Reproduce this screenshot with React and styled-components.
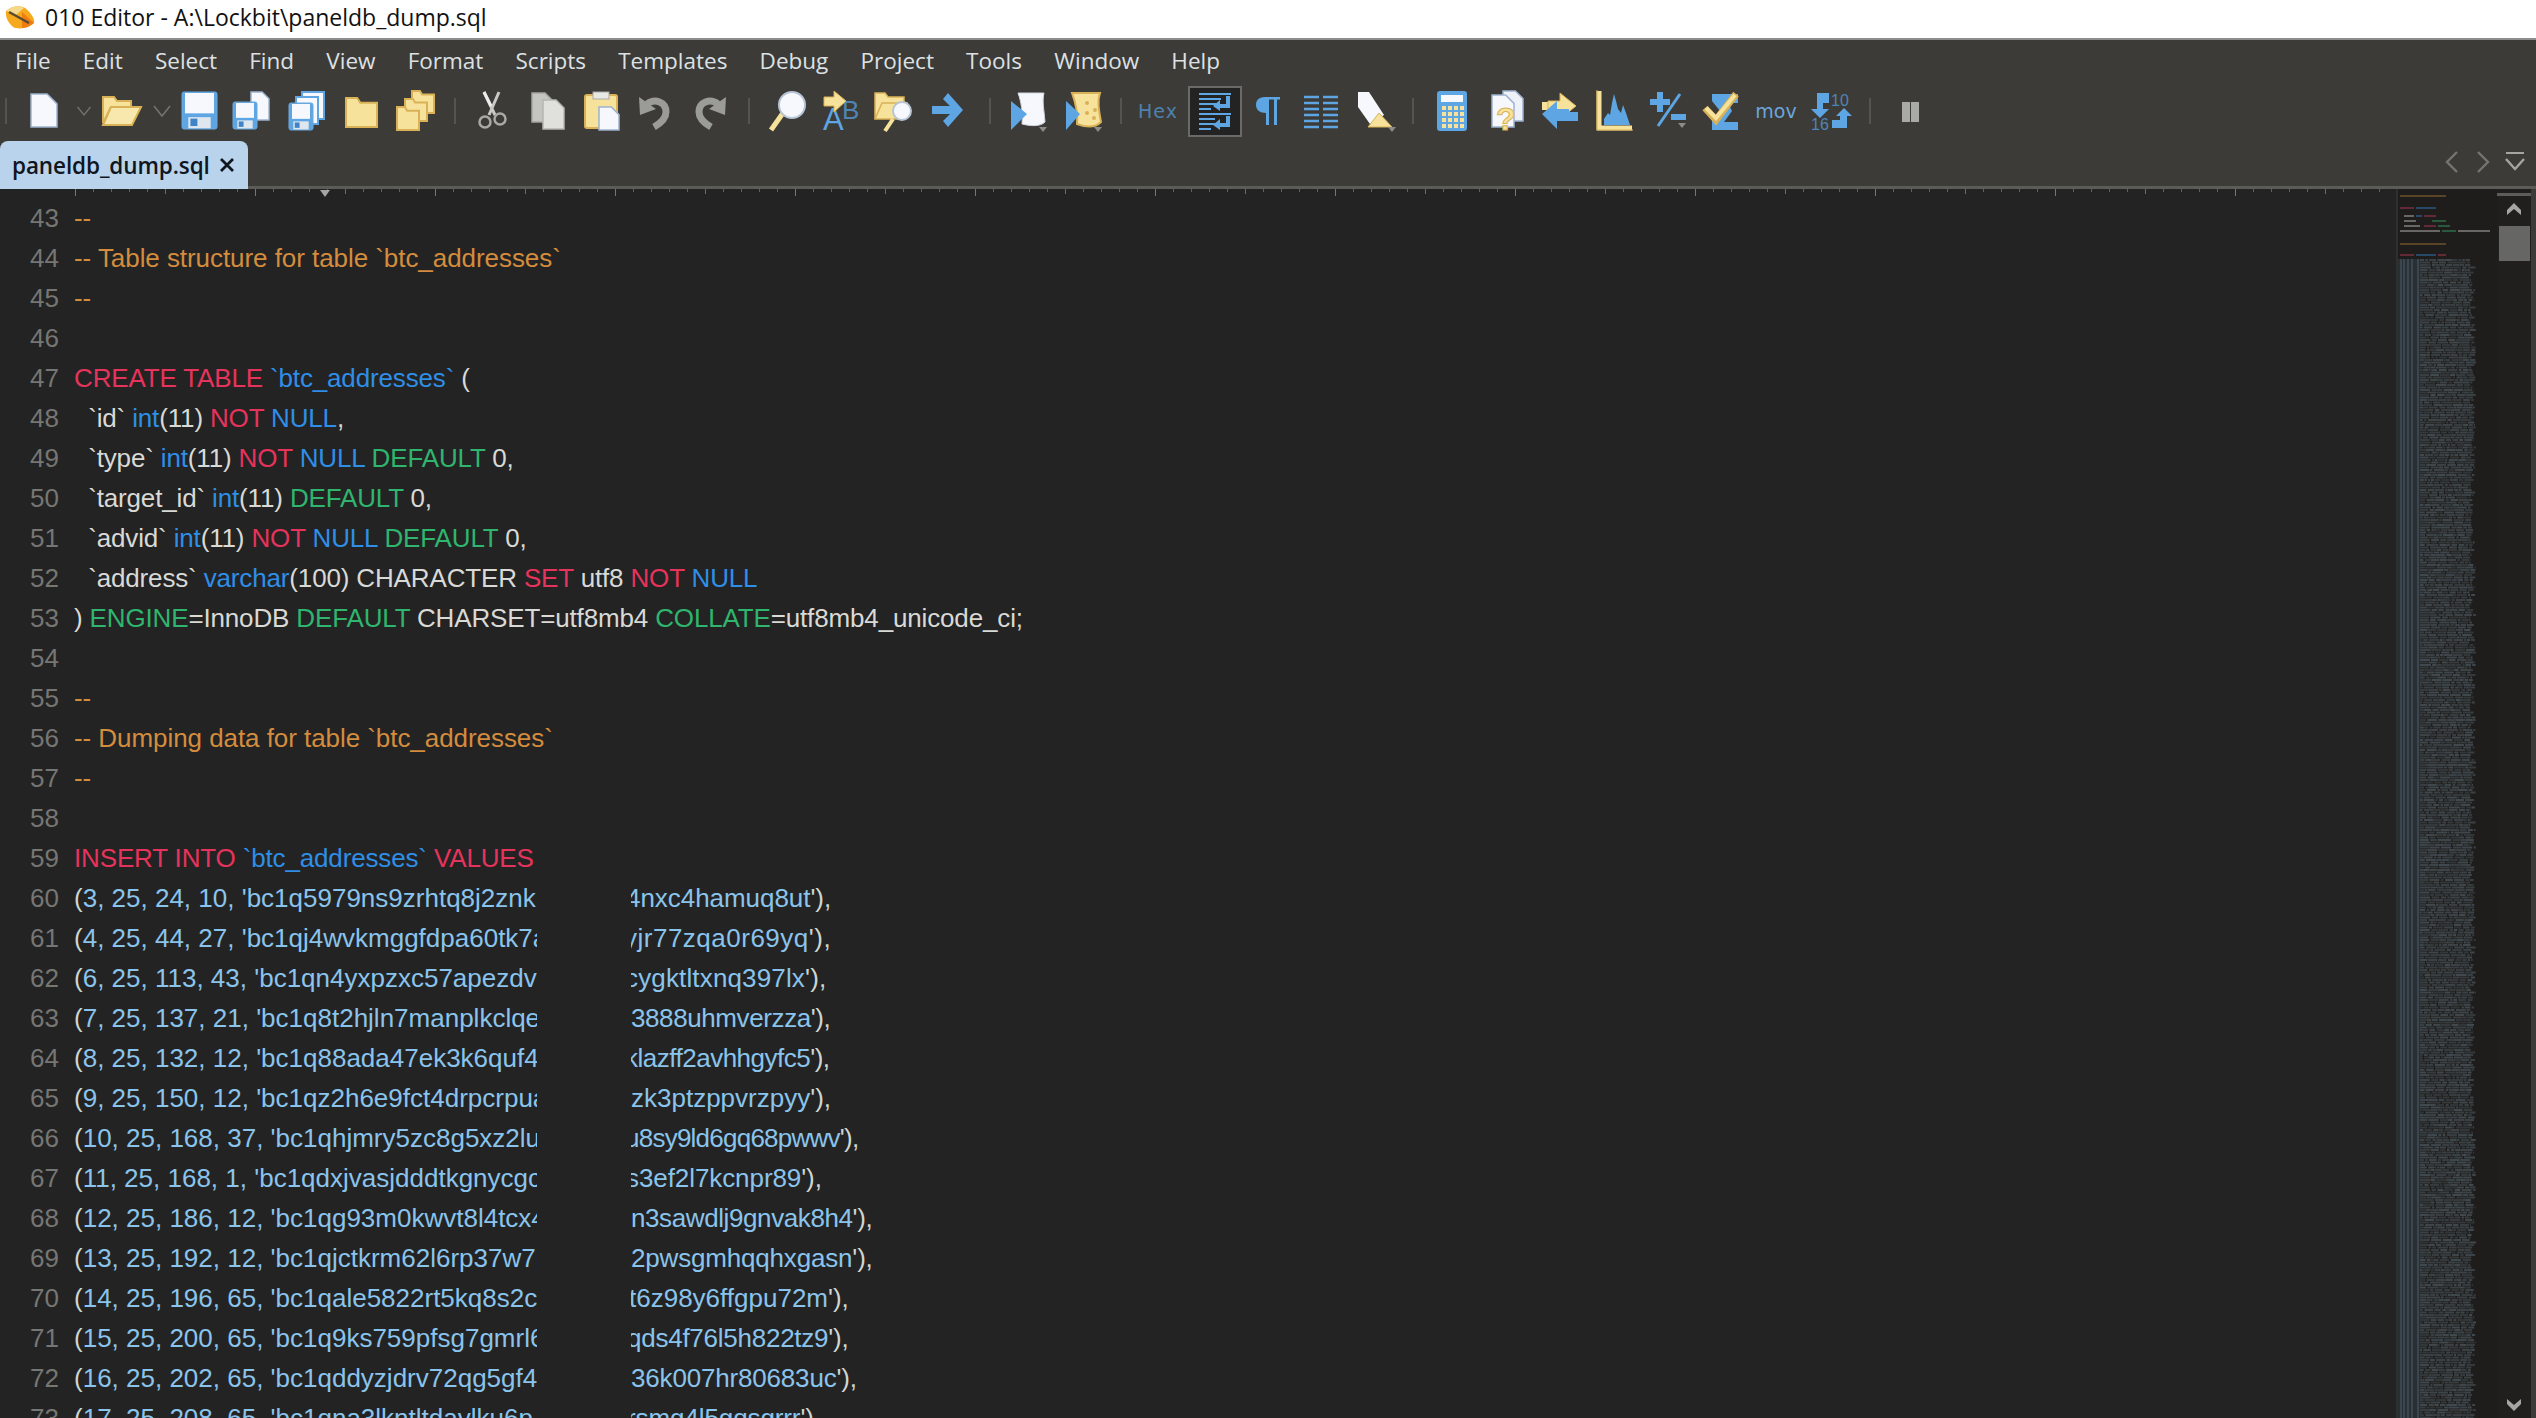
import React from 'react'
import styled, { createGlobalStyle } from 'styled-components'

const Y = '#f6e29b'
const YB = '#d9b257'
const B = '#5da6e3'
const BD = '#4f85b5'
const W = '#f6f8fd'
const WB = '#9db2cf'
const G = '#a9a9a5'

const GlobalStyle = createGlobalStyle`
html, body {
  margin: 0;
  padding: 0;
  background: #232323;
  overflow: hidden;
}
`

const Window = styled.div`
width : 2536px;
height : 1418px;
display : flex;
flex-direction : column;
overflow : hidden;
background : #3c3b37;
`
const TitleBar = styled.div`
height : 34px;
flex : none;
display : flex;
align-items : center;
background : #ffffff;
border-bottom : 2px solid #8d8d8b;
font-family : "Open Sans", sans-serif;
font-size : 23px;
line-height : 34px;
color : #111;
padding : 0 0 4px 2px;
gap : 9px;
`
const MenuBar = styled.div`
height : 41px;
flex : none;
display : flex;
align-items : center;
padding : 0 0 3px 15px;
gap : 32.2px;
font-family : "Open Sans", sans-serif;
font-size : 22.5px;
color : #dde1e4;
`
const Toolbar = styled.div`
height : 54px;
flex : none;
display : flex;
align-items : center;
`
const Tool = styled.div`
width : ${p => p.$w}px;
height : 51px;
flex : none;
display : flex;
align-items : center;
justify-content : center;
box-sizing : border-box;
${p => p.$active && 'background : #232323; border : 2px solid #6a6a68;'}
`
const Sep = styled.div`
width : ${p => p.$w}px;
height : 26px;
flex : none;
display : flex;
justify-content : center;
&:after {
  content : '';
  width : 2px;
  height : 100%;
  background : #55544f;
}
`
const HexLabel = styled.span`
font-family : "DejaVu Sans", sans-serif;
font-size : 19px;
color : #4f81ad;
letter-spacing : 1px;
`
const MovLabel = styled.span`
font-family : "DejaVu Sans", sans-serif;
font-size : 19px;
color : #6aa6dc;
`
const TabBar = styled.div`
height : 48px;
flex : none;
display : flex;
align-items : flex-start;
justify-content : space-between;
`
const Tab = styled.div`
position : relative;
z-index : 1;
width : 248px;
height : 48px;
margin-top : 3px;
box-sizing : border-box;
display : flex;
align-items : center;
padding-left : 12px;
gap : 9px;
border-radius : 8px 8px 0 0;
background : #b9d3ec;
color : #10161e;
font-family : "Open Sans", sans-serif;
font-weight : 600;
font-size : 22.5px;
letter-spacing : -0.1px;
`
const TabNav = styled.div`
display : flex;
align-items : center;
gap : 11px;
padding : 11px 10px 0 0;
`
const Main = styled.div`
flex : 1;
min-height : 0;
display : flex;
border-top : 3px solid #5b5b57;
background : #232323;
`
const EditorCol = styled.div`
flex : 1;
min-width : 0;
display : flex;
flex-direction : column;
`
const Ruler = styled.div`
position : relative;
height : 9px;
flex : none;
background-color : #232323;
background-repeat : no-repeat;
background-position : 75px 0, 75px 0, 75px 0;
background-size : 100% 7px, 100% 5px, 100% 3px;
background-image :
  repeating-linear-gradient(90deg, #77776f 0 1px, transparent 1px 180px),
  repeating-linear-gradient(90deg, #6d6d68 0 1px, transparent 1px 90px),
  repeating-linear-gradient(90deg, #5f5f5b 0 1px, transparent 1px 18px);
`
const RulerMark = styled.div`
position : absolute;
left : 320px;
top : 1px;
width : 0;
height : 0;
border-left : 5px solid transparent;
border-right : 5px solid transparent;
border-top : 7px solid #a5a5a1;
`
const Code = styled.div`
flex : 1;
min-height : 0;
overflow : hidden;
font-family : "Liberation Sans", Arial, sans-serif;
font-size : 26px;
line-height : 40px;
white-space : pre;
`
const Row = styled.div`
display : flex;
height : 40px;
`
const LineNo = styled.span`
width : 59px;
margin-right : 15px;
flex : none;
text-align : right;
color : #767674;
`
const tokenColors = {
  c: '#d48c3e',
  k: '#e6335c',
  b: '#2f8ee6',
  g: '#2fb56e',
  p: '#d9d9d6',
  v: '#8ac4ec',
  q: '#cfd6d2',
}
const tokenSpacing = { c: '-0.06px', k: '-0.15px', b: '-0.15px', g: '-0.15px', p: '-0.15px' }
const Token = styled.span`
color : ${p => tokenColors[p.$k]};
letter-spacing : ${p => tokenSpacing[p.$k] || 'inherit'};
`
const Head = styled.span`
width : 463px;
flex : none;
overflow : hidden;
`
const Tail = styled.span`
margin-left : 94px;
overflow : hidden;
flex : none;
`
const TailText = styled.span`
display : block;
margin-left : ${p => -p.$cut}px;
letter-spacing : ${p => p.$ls}px;
`
const OverviewCol = styled.div`
width : 101px;
height : 100%;
flex : none;
background : #1f1d1b;
border-left : 2px solid #2f2f2d;
box-sizing : border-box;
`
const ScrollCol = styled.div`
width : 34px;
flex : none;
display : flex;
flex-direction : column;
align-items : center;
background : #211f1d;
`
const ScrollLine = styled.div`
width : 100%;
height : 3px;
margin-top : 4px;
background : #5c5c58;
`
const ScrollBtn = styled.div`
height : 26px;
flex : none;
display : flex;
align-items : center;
justify-content : center;
`
const Thumb = styled.div`
width : 31px;
height : 35px;
flex : none;
margin-top : 4px;
background : #666664;
`
const ScrollTrack = styled.div`
flex : 1;
`
const RightEdge = styled.div`
width : 5px;
flex : none;
background : #3c3b37;
`

const AppIcon = () => (
  <svg width="34" height="28" viewBox="0 0 34 28">
    <path d="M4 8C9 3 18 2 23 5C28 9 33 15 32 20C27 25 17 27 11 24C6 20 3 13 4 8Z" fill="#f6a91c" />
    <path d="M4 8C9 3 18 2 22 5L14 12Z" fill="#f4d98a" />
    <path d="M20 9L32 20C28 23 24 25 20 25Z" fill="#ee7d12" />
    <path d="M7 9L27 20" stroke="#5a4a30" strokeWidth="2.5" />
  </svg>
)

const Ico = ({ children, w = 44 }) => (
  <svg width={w} height="44" viewBox={`0 0 ${w} 44`}>{children}</svg>
)

const Chevron = () => (
  <svg width="20" height="14" viewBox="0 0 20 14">
    <path d="M2 2L10 12L18 2" fill="none" stroke="#73736f" strokeWidth="1.6" />
  </svg>
)

const Drop = ({ x, y }) => <path d={`M${x} ${y}h8l-4 5z`} fill="#8b8b87" />

const Floppy = ({ x, y, w, h }) => (
  <g>
    <rect x={x} y={y} width={w} height={h} rx="2" fill={B} stroke="#6aa9df" />
    <rect x={x + 3} y={y + 1} width={w - 6} height={h * 0.55} fill={W} />
    <rect x={x + w * 0.18} y={y + h * 0.68} width={w * 0.64} height={h * 0.3} fill="#dfe6ee" />
    <rect x={x + w * 0.24} y={y + h * 0.72} width={w * 0.2} height={h * 0.2} fill="#3f83c8" />
  </g>
)

const Doc = ({ x, y, w, h, fill = W, stroke = WB }) => (
  <path
    d={`M${x} ${y}h${w * 0.62}l${w * 0.38} ${w * 0.38}V${y + h}H${x}Z`}
    fill={fill}
    stroke={stroke}
    strokeWidth="1.5"
  />
)

const Folder = ({ x, y, w, h }) => (
  <path
    d={`M${x} ${y}h${w * 0.36}l${w * 0.1} ${h * 0.16}H${x + w}V${y + h}H${x}Z`}
    fill={Y}
    stroke={YB}
    strokeWidth="2"
  />
)

const NewIcon = () => <Ico><Doc x={9} y={5} w={26} h={33} /></Ico>
const OpenIcon = () => (
  <Ico>
    <path d="M4 8h11l3 4h14v6H12L4 34Z" fill={Y} stroke={YB} strokeWidth="2" />
    <path d="M12 18H42L33 36H4Z" fill="#f9e8ad" stroke={YB} strokeWidth="2" />
  </Ico>
)
const SaveIcon = () => <Ico><Floppy x={4} y={3} w={35} h={37} /></Ico>
const SaveAsIcon = () => (
  <Ico>
    <Doc x={21} y={3} w={18} h={28} />
    <Floppy x={3} y={13} w={24} h={27} />
  </Ico>
)
const SaveAllIcon = () => (
  <Ico>
    <rect x="17" y="3" width="22" height="27" fill={W} stroke={B} strokeWidth="2" />
    <rect x="11" y="8" width="22" height="27" fill={W} stroke={B} strokeWidth="2" />
    <Floppy x={4} y={14} w={24} h={27} />
  </Ico>
)
const FolderIcon = () => <Ico><Folder x={6} y={9} w={31} h={29} /></Ico>
const FoldersIcon = () => (
  <Ico>
    <Folder x={18} y={2} w={22} h={22} />
    <Folder x={11} y={10} w={22} h={22} />
    <Folder x={3} y={18} w={22} h={23} />
  </Ico>
)
const CutIcon = () => (
  <Ico>
    <path d="M14 3L25 26M29 3L19 26" stroke="#c9c9c5" strokeWidth="3" fill="none" />
    <path d="M14 3L21 17" stroke="#ececea" strokeWidth="3" fill="none" />
    <circle cx="15" cy="33" r="5.5" fill="none" stroke={G} strokeWidth="2.5" />
    <circle cx="30" cy="30" r="5.5" fill="none" stroke={G} strokeWidth="2.5" />
  </Ico>
)
const CopyIcon = () => (
  <Ico>
    <Doc x={6} y={4} w={21} h={29} fill="#c4c4c0" stroke="#a5a5a1" />
    <Doc x={17} y={11} w={21} h={29} fill="#e0e0dc" stroke="#b5b5b1" />
  </Ico>
)
const PasteIcon = () => (
  <Ico>
    <rect x="5" y="6" width="32" height="33" rx="2" fill={Y} stroke={YB} strokeWidth="2" />
    <rect x="13" y="3" width="16" height="7" fill="#e8e8e4" stroke={G} />
    <Doc x={19} y={18} w={20} h={23} />
  </Ico>
)
const UndoIcon = ({ flip }) => (
  <Ico>
    <g transform={flip ? 'translate(44 0) scale(-1 1)' : undefined}>
      <path d="M14 15C22 9 33 13 33 23C33 29 28 34 21 38" fill="none" stroke="#9b9b97" strokeWidth="7" />
      <path d="M6 8L7 26L23 20Z" fill="#9b9b97" />
    </g>
  </Ico>
)
const FindIcon = () => (
  <Ico>
    <path d="M5 41L17 24" stroke={Y} strokeWidth="5" />
    <circle cx="26" cy="16" r="13" fill={W} stroke="#b7c4d6" strokeWidth="2" />
  </Ico>
)
const ReplaceIcon = () => (
  <Ico>
    <text x="23" y="30" fontFamily="Liberation Sans" fontSize="26" fill={BD}>B</text>
    <text x="4" y="41" fontFamily="Liberation Sans" fontSize="31" fill={B}>A</text>
    <path d="M5 8H15V2L27 12L15 23V17H5Z" fill={Y} stroke={YB} />
  </Ico>
)
const FindFilesIcon = () => (
  <Ico>
    <path d="M3 4h10l3 4h16v22H3Z" fill={Y} stroke={YB} strokeWidth="1.5" />
    <path d="M3 30L10 14H36" fill="none" stroke={YB} strokeWidth="1.5" />
    <path d="M13 42L21 30" stroke={Y} strokeWidth="4" />
    <circle cx="30" cy="22" r="9" fill={W} stroke="#b7c4d6" strokeWidth="2" />
  </Ico>
)
const GotoIcon = () => (
  <Ico>
    <path d="M22 4L37 21L22 38L17 32L24 25H6V17H24L17 10Z" fill={B} />
  </Ico>
)
const ScriptIcon = () => (
  <Ico>
    <path d="M12 4H38C36 12 38 20 39 33C34 38 24 37 16 35C17 24 15 12 12 4Z" fill={W} stroke="#cfd6e0" />
    <path d="M5 12L21 25L5 41Z" fill={B} />
    <Drop x={33} y={38} />
  </Ico>
)
const TemplateIcon = () => (
  <Ico>
    <path d="M11 4H39C36 12 38 22 40 33C34 39 24 38 16 35C17 24 14 12 11 4Z" fill={Y} stroke={YB} strokeWidth="2" />
    <circle cx="26" cy="14" r="2" fill={YB} />
    <circle cx="34" cy="21" r="2" fill={YB} />
    <circle cx="26" cy="24" r="2" fill={YB} />
    <circle cx="33" cy="29" r="2" fill={YB} />
    <path d="M5 12L19 25L5 41Z" fill={B} />
    <Drop x={33} y={38} />
  </Ico>
)
const WrapIcon = () => (
  <Ico>
    <g stroke={B} strokeWidth="2.2" fill="none">
      <path d="M6 5H38M6 10H28M6 15H24M6 20H18" />
      <path d="M6 25H38M6 30H22M6 35H28M6 40H18" />
      <path d="M35 7V17H24M35 27V36H24" strokeWidth="4" />
    </g>
    <path d="M27 11L20 17L27 22ZM27 30L20 36L27 41Z" fill={B} />
  </Ico>
)
const ParaIcon = () => (
  <Ico>
    <path d="M19 8C12 8 10 12 10 16C10 21 14 24 20 24V36H23V8Z" fill={B} />
    <rect x="28" y="8" width="3" height="28" fill={B} />
    <rect x="19" y="8" width="15" height="2.5" fill={B} />
  </Ico>
)
const ColsIcon = () => (
  <Ico>
    <g stroke={B} strokeWidth="2.4" fill="none">
      <path d="M5 8H20M5 14H20M5 20H20M5 26H20M5 32H20M5 38H20" />
      <path d="M24 8H39M24 14H39M24 20H39M24 26H39M24 32H39M24 38H39" />
    </g>
  </Ico>
)
const EraserIcon = () => (
  <Ico>
    <path d="M6 3H17L32 26L18 35L6 18Z" fill={W} />
    <path d="M27 24L40 38H16Z" fill={Y} stroke={YB} />
    <Drop x={36} y={38} />
  </Ico>
)
const CalcIcon = () => (
  <Ico>
    <rect x="7" y="2" width="30" height="40" rx="3" fill={B} />
    <rect x="11" y="6" width="22" height="7" fill={W} />
    {[18, 24, 30, 36].flatMap(y => [12, 18, 24, 30].map(x => (
      <rect key={`${x}-${y}`} x={x} y={y - 1} width="4" height="4" fill={Y} />
    )))}
  </Ico>
)
const HelpIcon = () => (
  <Ico>
    <Doc x={19} y={2} w={20} h={30} fill="#eef2f8" />
    <Doc x={8} y={6} w={22} h={32} />
    <text x="12" y="41" fontFamily="Liberation Sans" fontWeight="700" fontSize="32" fill={Y} stroke={YB} strokeWidth="1">?</text>
  </Ico>
)
const CompareIcon = () => (
  <Ico>
    <rect x="4" y="13" width="12" height="8" fill={Y} />
    <rect x="28" y="23" width="12" height="9" fill={B} />
    <path d="M22 4L38 17L22 30V23H10V12H22Z" fill={Y} stroke={YB} />
    <path d="M19 12L4 25L19 40V32H31V20H19Z" fill={B} />
  </Ico>
)
const HistIcon = () => (
  <Ico>
    <path d="M7 2V39H40" fill="none" stroke={Y} strokeWidth="5" />
    <path d="M5 1V41H41" fill="none" stroke={YB} strokeWidth="1" />
    <path d="M12 36V30L16 24L18 26L20 14L22 5L24 12L26 20L29 24L31 16L34 24L36 30L38 36Z" fill={B} />
  </Ico>
)
const PlusMinusIcon = () => (
  <Ico>
    <path d="M11 3h6v7h7v6h-7v7h-6v-7H4v-6h7Z" fill={B} />
    <path d="M34 5L12 37" stroke={B} strokeWidth="3" />
    <rect x="25" y="25" width="15" height="6" fill={B} />
    <Drop x={32} y={34} />
  </Ico>
)
const SigmaIcon = () => (
  <Ico>
    <path d="M12 5H38V14H28L32 22L24 33H38V41H12V32L20 22L12 12Z" fill={B} />
    <path d="M5 19L16 31L36 5" fill="none" stroke={YB} strokeWidth="7" />
    <path d="M6 19L16 29L35 6" fill="none" stroke={Y} strokeWidth="4" />
  </Ico>
)
const BaseIcon = () => (
  <Ico>
    <path d="M9 4H21V14H15V20H21L12 29L3 20H9Z" fill={B} />
    <path d="M36 19L44 27H39V39H24V31H32V27H28Z" fill={B} />
    <text x="23" y="17" fontFamily="Liberation Sans" fontSize="16" fill={BD}>10</text>
    <text x="3" y="41" fontFamily="Liberation Sans" fontSize="16" fill={BD}>16</text>
  </Ico>
)
const PauseIcon = () => (
  <Ico>
    <rect x="14" y="13" width="8" height="20" fill={G} />
    <rect x="23" y="13" width="8" height="20" fill={G} />
  </Ico>
)

const NavArrow = ({ d }) => (
  <svg width="20" height="26" viewBox="0 0 20 26">
    <path d={d} fill="none" stroke="#75756f" strokeWidth="2.4" />
  </svg>
)
const NavMenu = () => (
  <svg width="22" height="26" viewBox="0 0 22 26">
    <path d="M2 4H20" stroke="#a5a5a1" strokeWidth="2" />
    <path d="M2 10L11 20L20 10" fill="none" stroke="#a5a5a1" strokeWidth="2.4" />
  </svg>
)
const ScrollArrow = ({ up }) => (
  <svg width="18" height="14" viewBox="0 0 18 14">
    <path d={up ? 'M9 1L16 8V13L9 7L2 13V8Z' : 'M9 13L16 6V1L9 7L2 1V6Z'} fill="#a5a5a1" />
  </svg>
)

// small pseudo random numbers, so the overview looks the same on each run
let seed = 17
const rnd = () => {
  seed = (seed * 16807) % 2147483647
  return seed / 2147483647
}

const overviewHeader = [
  [6, '#7a5a2e', 2, 46],
  [18, '#8a3045', 2, 14], [18, '#2e5f92', 18, 20],
  [26, '#8f8f8a', 6, 10], [26, '#2e5f92', 18, 6], [26, '#8a3045', 26, 12],
  [31, '#8f8f8a', 6, 12], [31, '#2e7a52', 34, 14],
  [36, '#8f8f8a', 6, 16], [36, '#8a3045', 26, 12], [36, '#2e7a52', 40, 12],
  [41, '#8f8f8a', 2, 40], [41, '#2e7a52', 44, 14], [41, '#8f8f8a', 60, 32],
  [54, '#7a5a2e', 2, 46],
  [65, '#8a3045', 2, 14], [65, '#2e5f92', 18, 20], [65, '#8a3045', 40, 8],
]

const overviewRows = []
for (let y = 70; y < 1232; y += 2.5) {
  const end = 72 + rnd() * 6
  let x = 22
  while (x < end) {
    const len = Math.min(2 + rnd() * 9, end - x)
    overviewRows.push({ y, x, len, o: 0.45 + rnd() * 0.4 })
    x += len + rnd() * 1.6
  }
}

const Overview = () => (
  <svg width="99" height="1229" viewBox="0 0 99 1229">
    <g opacity="0.65">
      {overviewHeader.map(([y, c, x, w]) => (
        <rect key={`${y}-${x}`} x={x} y={y} width={w} height="2" fill={c} />
      ))}
    </g>
    <rect x="0" y="70" width="22" height="1160" fill="#2a2f33" />
    {[2, 5, 9, 13, 19].map(x => (
      <rect key={x} x={x} y="70" width="2" height="1160" fill="#3a4650" />
    ))}
    {overviewRows.map((r, i) => (
      <rect key={i} x={r.x} y={r.y} width={r.len} height="2" fill="#475259" opacity={r.o} />
    ))}
  </svg>
)

const menus = ['File', 'Edit', 'Select', 'Find', 'View', 'Format', 'Scripts', 'Templates', 'Debug', 'Project', 'Tools', 'Window', 'Help']

const tools = [
  ['s', 12],
  ['t', 64, <NewIcon />],
  ['t', 16, <Chevron />],
  ['t', 58, <OpenIcon />],
  ['t', 24, <Chevron />],
  ['t', 52, <SaveIcon />],
  ['t', 52, <SaveAsIcon />],
  ['t', 58, <SaveAllIcon />],
  ['t', 52, <FolderIcon />],
  ['t', 56, <FoldersIcon />],
  ['s', 22],
  ['t', 52, <CutIcon />],
  ['t', 60, <CopyIcon />],
  ['t', 48, <PasteIcon />],
  ['t', 58, <UndoIcon />],
  ['t', 52, <UndoIcon flip />],
  ['s', 26],
  ['t', 52, <FindIcon />],
  ['t', 54, <ReplaceIcon />],
  ['t', 52, <FindFilesIcon />],
  ['t', 56, <GotoIcon />],
  ['s', 28],
  ['t', 48, <ScriptIcon />],
  ['t', 62, <TemplateIcon />],
  ['s', 14],
  ['t', 60, <HexLabel>Hex</HexLabel>],
  ['a', 54, <WrapIcon />],
  ['t', 52, <ParaIcon />],
  ['t', 54, <ColsIcon />],
  ['t', 52, <EraserIcon />],
  ['s', 25],
  ['t', 54, <CalcIcon />],
  ['t', 54, <HelpIcon />],
  ['t', 54, <CompareIcon />],
  ['t', 54, <HistIcon />],
  ['t', 54, <PlusMinusIcon />],
  ['t', 54, <SigmaIcon />],
  ['t', 54, <MovLabel>mov</MovLabel>],
  ['t', 54, <BaseIcon />],
  ['s', 26],
  ['t', 54, <PauseIcon />],
]

const plain = [
  [43, [['c', '--']]],
  [44, [['c', '-- Table structure for table `btc_addresses`']]],
  [45, [['c', '--']]],
  [46, []],
  [47, [['k', 'CREATE TABLE '], ['b', '`btc_addresses`'], ['p', ' (']]],
  [48, [['p', '  `id` '], ['b', 'int'], ['p', '(11) '], ['k', 'NOT '], ['b', 'NULL'], ['p', ',']]],
  [49, [['p', '  `type` '], ['b', 'int'], ['p', '(11) '], ['k', 'NOT '], ['b', 'NULL '], ['g', 'DEFAULT '], ['p', '0,']]],
  [50, [['p', '  `target_id` '], ['b', 'int'], ['p', '(11) '], ['g', 'DEFAULT '], ['p', '0,']]],
  [51, [['p', '  `advid` '], ['b', 'int'], ['p', '(11) '], ['k', 'NOT '], ['b', 'NULL '], ['g', 'DEFAULT '], ['p', '0,']]],
  [52, [['p', '  `address` '], ['b', 'varchar'], ['p', '(100) CHARACTER '], ['k', 'SET '], ['p', 'utf8 '], ['k', 'NOT '], ['b', 'NULL']]],
  [53, [['p', ') '], ['g', 'ENGINE'], ['p', '=InnoDB '], ['g', 'DEFAULT '], ['p', 'CHARSET=utf8mb4 '], ['g', 'COLLATE'], ['p', '=utf8mb4_unicode_ci;']]],
  [54, []],
  [55, [['c', '--']]],
  [56, [['c', '-- Dumping data for table `btc_addresses`']]],
  [57, [['c', '--']]],
  [58, []],
  [59, [['k', 'INSERT INTO '], ['b', '`btc_addresses`'], ['k', ' VALUES']]],
]

// line, text before the blanked part, text after it, how much of its first letter is cut, spacing
const dataRows = [
  [60, "3, 25, 24, 10, 'bc1q5979ns9zrhtq8j2znk", "4nxc4hamuq8ut", 5, -0.05],
  [61, "4, 25, 44, 27, 'bc1qj4wvkmggfdpa60tk7a", "yjr77zqa0r69yq", 7, 0.5],
  [62, "6, 25, 113, 43, 'bc1qn4yxpzxc57apezdv", "cygktltxnq397lx", 6, 0.15],
  [63, "7, 25, 137, 21, 'bc1q8t2hjln7manplkclqe", "3888uhmverzza", 0, -0.4],
  [64, "8, 25, 132, 12, 'bc1q88ada47ek3k6quf4r", "klazff2avhhgyfc5", 6, -0.5],
  [65, "9, 25, 150, 12, 'bc1qz2h6e9fct4drpcrpua", "zk3ptzppvrzpyy", 0, 0],
  [66, "10, 25, 168, 37, 'bc1qhjmry5zc8g5xz2lu", "u8sy9ld6gq68pwwv", 6, -0.76],
  [67, "11, 25, 168, 1, 'bc1qdxjvasjdddtkgnycgc", "s3ef2l7kcnpr89", 5, -0.08],
  [68, "12, 25, 186, 12, 'bc1qg93m0kwvt8l4tcx4", "n3sawdlj9gnvak8h4", 0, -0.4],
  [69, "13, 25, 192, 12, 'bc1qjctkrm62l6rp37w7p", "2pwsgmhqqhxgasn", 0, -0.18],
  [70, "14, 25, 196, 65, 'bc1qale5822rt5kq8s2c", "t6z98y6ffgpu72m", 2, 0],
  [71, "15, 25, 200, 65, 'bc1q9ks759pfsg7gmrl6", "qds4f76l5h822tz9", 4, -0.25],
  [72, "16, 25, 202, 65, 'bc1qddyzjdrv72qg5gf4k", "36k007hr80683uc", 0, -0.18],
  [73, "17, 25, 208, 65, 'bc1qna3lkntltdavlku6p", "rsmg4l5gqsgrrr", 4, -0.1],
]

function App() {
  return (
    <Window>
      <GlobalStyle />
      <TitleBar>
        <AppIcon />
        010 Editor - A:\Lockbit\paneldb_dump.sql
      </TitleBar>
      <MenuBar>
        {menus.map(m => <span key={m}>{m}</span>)}
      </MenuBar>
      <Toolbar>
        {tools.map(([kind, w, icon], i) => (
          kind === 's'
            ? <Sep key={i} $w={w} />
            : <Tool key={i} $w={w} $active={kind === 'a'}>{icon}</Tool>
        ))}
      </Toolbar>
      <TabBar>
        <Tab>
          paneldb_dump.sql
          <svg width="16" height="16" viewBox="0 0 16 16">
            <path d="M2 2L14 14M14 2L2 14" stroke="#10161e" strokeWidth="2.8" />
          </svg>
        </Tab>
        <TabNav>
          <NavArrow d="M15 3L5 13L15 23" />
          <NavArrow d="M5 3L15 13L5 23" />
          <NavMenu />
        </TabNav>
      </TabBar>
      <Main>
        <EditorCol>
          <Ruler><RulerMark /></Ruler>
          <Code>
            {plain.map(([n, tokens]) => (
              <Row key={n}>
                <LineNo>{n}</LineNo>
                <span>{tokens.map(([k, t], i) => <Token key={i} $k={k}>{t}</Token>)}</span>
              </Row>
            ))}
            {dataRows.map(([n, head, tail, cut, ls]) => (
              <Row key={n}>
                <LineNo>{n}</LineNo>
                <Head><Token $k="q">(</Token><Token $k="v">{head}</Token></Head>
                <Tail>
                  <TailText $cut={cut} $ls={ls}><Token $k="v">{tail}</Token><Token $k="q">'),</Token></TailText>
                </Tail>
              </Row>
            ))}
          </Code>
        </EditorCol>
        <OverviewCol><Overview /></OverviewCol>
        <ScrollCol>
          <ScrollLine />
          <ScrollBtn><ScrollArrow up /></ScrollBtn>
          <Thumb />
          <ScrollTrack />
          <ScrollBtn><ScrollArrow /></ScrollBtn>
        </ScrollCol>
        <RightEdge />
      </Main>
    </Window>
  )
}

export default App
